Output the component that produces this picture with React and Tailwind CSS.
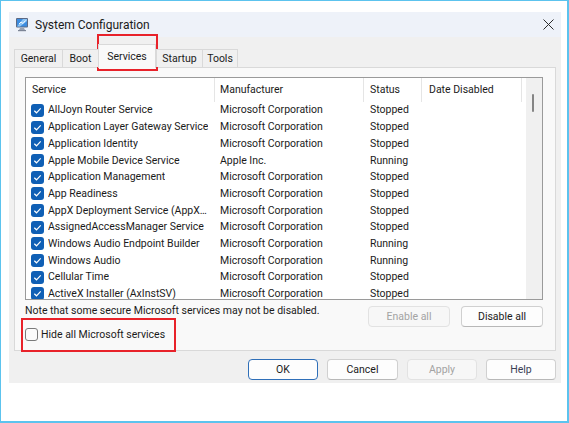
import React from 'react';

const services = [
  ['AllJoyn Router Service', 'Microsoft Corporation', 'Stopped'],
  ['Application Layer Gateway Service', 'Microsoft Corporation', 'Stopped'],
  ['Application Identity', 'Microsoft Corporation', 'Stopped'],
  ['Apple Mobile Device Service', 'Apple Inc.', 'Running'],
  ['Application Management', 'Microsoft Corporation', 'Stopped'],
  ['App Readiness', 'Microsoft Corporation', 'Stopped'],
  ['AppX Deployment Service (AppXSVC)', 'Microsoft Corporation', 'Stopped'],
  ['AssignedAccessManager Service', 'Microsoft Corporation', 'Stopped'],
  ['Windows Audio Endpoint Builder', 'Microsoft Corporation', 'Running'],
  ['Windows Audio', 'Microsoft Corporation', 'Running'],
  ['Cellular Time', 'Microsoft Corporation', 'Stopped'],
  ['ActiveX Installer (AxInstSV)', 'Microsoft Corporation', 'Stopped'],
];

const tabs = [
  { name: 'General', w: 'w-[48px]' },
  { name: 'Boot', w: 'w-[36px]' },
  { name: 'Services', w: 'w-[58px]', active: true },
  { name: 'Startup', w: 'w-[46px]' },
  { name: 'Tools', w: 'w-[36px]' },
];

const Check = () => (
  <span className="flex h-[13px] w-[13px] shrink-0 items-center justify-center rounded-[3px] bg-[#0f5fb5]">
    <svg width="11" height="11" viewBox="0 0 11 11">
      <path d="M2.3 5.7 L4.5 7.8 L8.7 3.4" fill="none" stroke="#fff" strokeWidth="1.2" />
    </svg>
  </span>
);

const AppIcon = () => (
  <svg width="15" height="15" viewBox="0 0 15 15">
    <rect x="1" y="1" width="12" height="9.5" rx="1" fill="#5b6a86" />
    <rect x="2" y="2" width="10" height="7.5" fill="#3d8de0" />
    <path d="M2 9.5 L8 2 L12 2 L12 4 L5 9.5 Z" fill="#8cc4f5" />
    <path d="M4 7 L6 5 L8 6.5 L10.5 3.5" fill="none" stroke="#fff" strokeWidth="0.9" />
    <path d="M5 11 L9 11 L10 13 L4 13 Z" fill="#9aa3b3" />
    <rect x="3" y="13" width="8" height="1.2" fill="#7c8596" />
  </svg>
);

const Button = ({ children, disabled, primary, className = '' }) => (
  <div
    className={`flex h-[21px] items-center justify-center rounded-[4px] border ${
      disabled
        ? 'border-[#e2e2e2] bg-[#f7f7f7] text-[#a3a3a3]'
        : primary
        ? 'border-[#2f6fb8] bg-[#fdfdfd] text-[#1b1b1b]'
        : 'border-[#d0d0d0] border-b-[#b8b8b8] bg-[#fdfdfd] text-[#1b1b1b]'
    } ${className}`}
  >
    {children}
  </div>
);

export default function App() {
  return (
    <div className="relative h-[423px] w-[569px] overflow-hidden border-2 border-l border-t border-[#5cc3ee] bg-white pl-[8px] pt-[11px] font-[family-name:Roboto,sans-serif] text-[10.5px] text-[#1b1b1b]">
      <div className="flex h-[371px] w-[552px] flex-col">
        {/* Title bar */}
        <div className="flex h-[25px] shrink-0 items-center bg-[#eef2f9] pl-[6px] pr-[6px]">
          <AppIcon />
          <span className="ml-[5px] text-[12px] leading-none">System Configuration</span>
          <svg className="ml-auto mr-[1px]" width="11" height="11" viewBox="0 0 11 11">
            <path d="M0.5 0.5 L10.5 10.5 M10.5 0.5 L0.5 10.5" stroke="#2b2b2b" strokeWidth="1" />
          </svg>
        </div>

        {/* Body */}
        <div className="flex flex-1 flex-col bg-[#f0f0f0] px-[5px] pt-[7px]">
          {/* Tabs */}
          <div className="relative z-10 flex h-[23px] items-end">
            {tabs.map((t) =>
              t.active ? (
                <div
                  key={t.name}
                  className={`${t.w} -mb-px flex h-[24px] items-center justify-center border border-b-0 border-[#d9d9d9] bg-[#f9f9f9] pt-[1px]`}
                >
                  {t.name}
                </div>
              ) : (
                <div
                  key={t.name}
                  className={`${t.w} flex h-[18px] items-center justify-center border border-b-0 border-r-0 border-[#d9d9d9] bg-[#f0f0f0] last:border-r`}
                >
                  {t.name}
                </div>
              )
            )}
          </div>

          {/* Panel */}
          <div className="h-[284px] border border-[#d9d9d9] bg-[#f9f9f9] pl-[10px] pt-[9px]">
            {/* List box */}
            <div className="flex h-[223px] w-[518px] border border-[#9a9a9a] bg-white">
              <div className="flex w-[500px] flex-col overflow-hidden">
                <div className="flex h-[24px] shrink-0">
                  <div className="flex w-[189px] items-center border-r border-[#e5e5e5] pl-[6px]">Service</div>
                  <div className="flex w-[149px] items-center border-r border-[#e5e5e5] pl-[5px]">Manufacturer</div>
                  <div className="flex w-[58px] items-center border-r border-[#e5e5e5] pl-[6px]">Status</div>
                  <div className="flex w-[100px] items-center border-r border-[#e5e5e5] pl-[7px]">Date Disabled</div>
                </div>
                {services.map(([name, maker, status]) => (
                  <div key={name} className="flex h-[16.7px] shrink-0 items-center">
                    <div className="flex w-[189px] items-center gap-[4px] pl-[5px] pr-[3px]">
                      <Check />
                      <span className="truncate">{name}</span>
                    </div>
                    <div className="w-[149px] pl-[5px]">{maker}</div>
                    <div className="w-[58px] pl-[6px]">{status}</div>
                  </div>
                ))}
              </div>
              <div className="ml-auto w-[16px] bg-[#f0f0f0] pl-[6px] pt-[16px]">
                <div className="h-[18px] w-[2px] rounded-full bg-[#858585]" />
              </div>
            </div>

            {/* Note + buttons */}
            <div className="mt-[3px] flex w-[518px] items-start justify-between">
              <div>
                <p className="leading-[15px]">Note that some secure Microsoft services may not be disabled.</p>
                <div className="mt-[10px] flex items-center gap-[3px]">
                  <span className="h-[13px] w-[13px] rounded-[3px] border border-[#7a7a7a] bg-[#fbfbfb]" />
                  <span className="leading-[13px]">Hide all Microsoft services</span>
                </div>
              </div>
              <div className="mt-[3px] flex gap-[11px]">
                <Button disabled className="w-[82px]">Enable all</Button>
                <Button className="w-[82px]">Disable all</Button>
              </div>
            </div>
          </div>

          {/* Dialog buttons */}
          <div className="mt-[8px] flex justify-end gap-[9px]">
            <Button primary className="w-[70px]">OK</Button>
            <Button className="w-[71px]">Cancel</Button>
            <Button disabled className="w-[70px]">Apply</Button>
            <Button className="w-[70px] text-[#3b3f55]">Help</Button>
          </div>
        </div>
      </div>

      {/* Annotation boxes */}
      <div className="absolute left-[96px] top-[33px] h-[37px] w-[61px] border-2 border-[#e8222a]" />
      <div className="absolute left-[20px] top-[317px] h-[34px] w-[155px] border-2 border-[#e8222a]" />
    </div>
  );
}
